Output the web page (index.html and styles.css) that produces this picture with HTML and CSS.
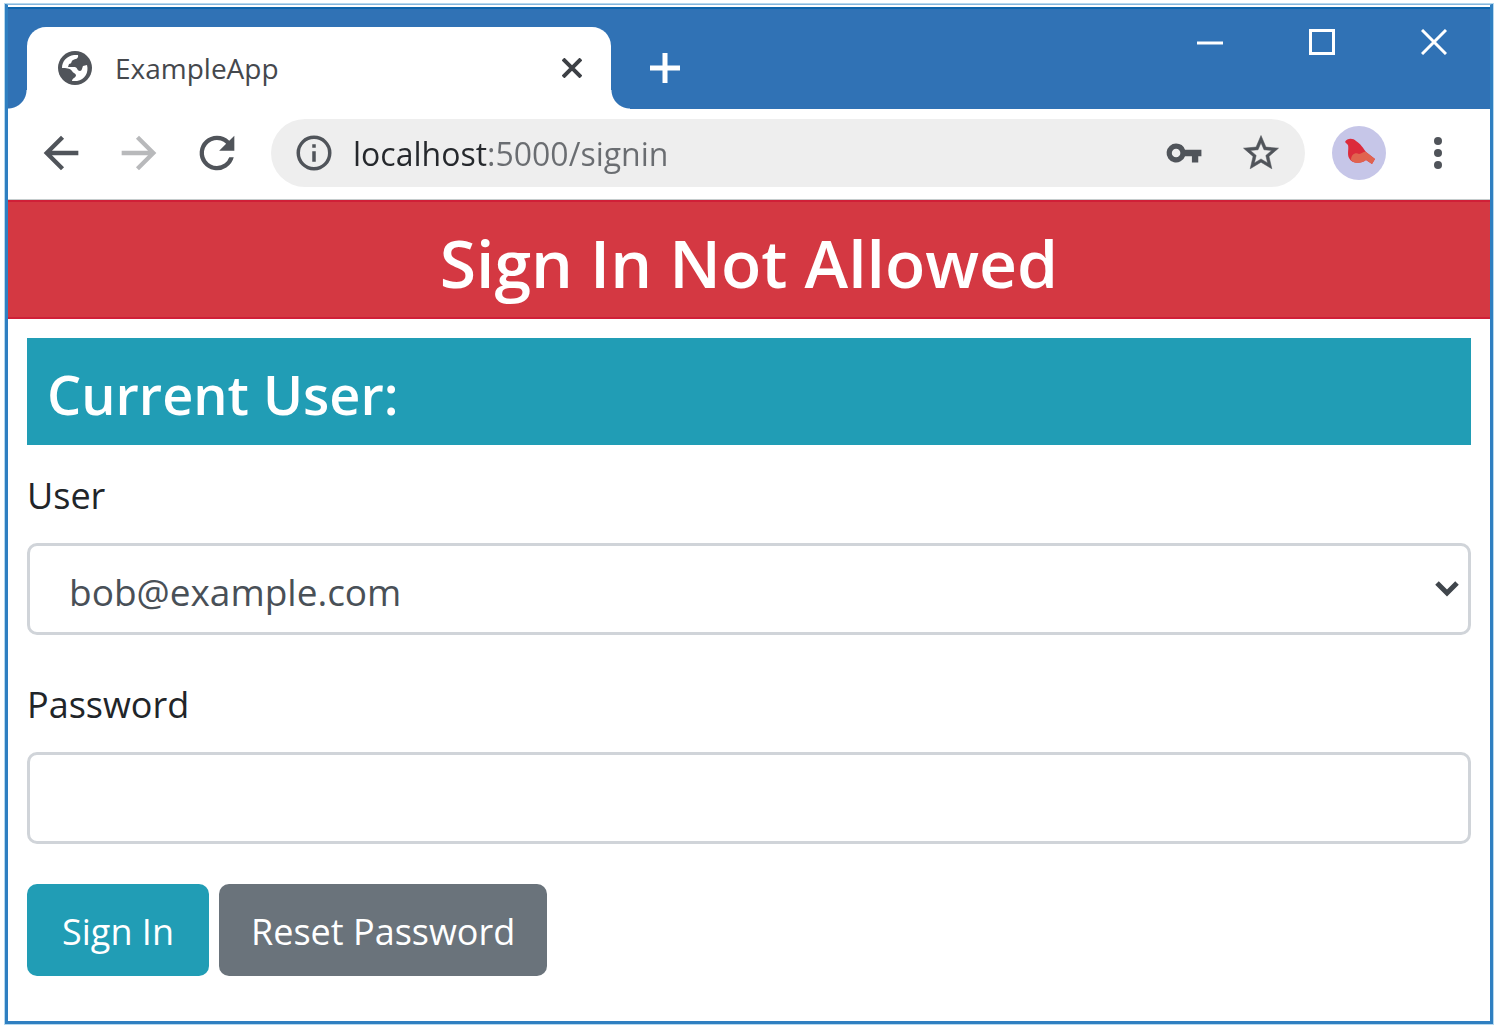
FILE: index.html
```html
<!DOCTYPE html>
<html lang="en">
<head>
<meta charset="utf-8">
<title>ExampleApp</title>
<link rel="stylesheet" href="styles.css">
</head>
<body>
<div class="window">
  <header class="tabstrip">
    <span class="foot foot-left"></span>
    <div class="tab">
      <svg class="globe" viewBox="0 0 34 34" aria-hidden="true">
        <circle cx="17" cy="17" r="17" fill="#50545a"/>
        <path d="M4 17 C4 10 9 5 16 4 L20 4 C21 8 17 8 15 9 C13 10 14 13 11 13 L10 16 L17 16 C20 17 19 20 22 20 C24 20 24 17 25 15 L29 14 C31 21 27 29 19 30 L14 30 C14 27 18 27 18 24 C17 22 15 22 14 20 C12 17 8 17 4 17Z" fill="#fff"/>
      </svg>
      <span class="tab-title">ExampleApp</span>
      <button class="icon-button" type="button" aria-label="Close tab">
        <svg width="20" height="20" viewBox="0 0 20 20"><path d="M1 1 19 19M19 1 1 19" stroke="#3d4045" stroke-width="4"/></svg>
      </button>
    </div>
    <span class="foot foot-right"></span>
    <button class="icon-button new-tab" type="button" aria-label="New tab">
      <svg width="30" height="30" viewBox="0 0 30 30"><path d="M15 0V30M0 15H30" stroke="#fff" stroke-width="5"/></svg>
    </button>
    <div class="window-controls">
      <button class="icon-button control" type="button" aria-label="Minimize">
        <svg width="26" height="26" viewBox="0 0 26 26"><path d="M0 14H26" stroke="#fff" stroke-width="3"/></svg>
      </button>
      <button class="icon-button control" type="button" aria-label="Maximize">
        <svg width="26" height="26" viewBox="0 0 26 26"><path d="M1.500 1.500H24.500V24.500H1.500Z" fill="none" stroke="#fff" stroke-width="3"/></svg>
      </button>
      <button class="icon-button control" type="button" aria-label="Close">
        <svg width="26" height="26" viewBox="0 0 26 26"><path d="M1 1 25 25M25 1 1 25" stroke="#fff" stroke-width="3"/></svg>
      </button>
    </div>
  </header>

  <nav class="toolbar" aria-label="Browser toolbar">
    <div class="nav-buttons">
      <button class="icon-button" type="button" aria-label="Back">
        <svg width="52" height="52" viewBox="0 0 24 24"><path d="M20 11H7.830l5.590-5.590L12 4l-8 8 8 8 1.410-1.410L7.830 13H20z" fill="#50545a"/></svg>
      </button>
      <button class="icon-button" type="button" aria-label="Forward">
        <svg width="52" height="52" viewBox="0 0 24 24"><path d="M12 4l-1.410 1.410L16.170 11H4v2h12.170l-5.580 5.590L12 20l8-8z" fill="#b8b9bb"/></svg>
      </button>
      <button class="icon-button" type="button" aria-label="Reload">
        <svg width="52" height="52" viewBox="0 0 24 24"><path d="M17.650 6.350A7.958 7.958 0 0 0 12 4a8 8 0 1 0 7.730 10h-2.080A5.990 5.990 0 0 1 12 18a6 6 0 1 1 4.220-10.220L13 11h7V4z" fill="#50545a"/></svg>
      </button>
    </div>
    <div class="omnibox">
      <svg width="42" height="42" viewBox="0 0 24 24" aria-hidden="true"><path d="M11 7h2v2h-2zm0 4h2v6h-2zm1-9a10 10 0 1 0 0 20 10 10 0 0 0 0-20zm0 18a8 8 0 1 1 0-16 8 8 0 0 1 0 16z" fill="#50545a"/></svg>
      <input class="address" type="text" value="localhost:5000/signin" aria-label="Address">
      <button class="icon-button" type="button" aria-label="Saved passwords">
        <svg width="38" height="38" viewBox="0 0 24 24"><path d="M12.650 10A5.990 5.990 0 0 0 7 6a6 6 0 1 0 5.650 8H17v4h4v-4h2v-4H12.650zM7 14.700a2.700 2.700 0 1 1 0-5.400 2.700 2.700 0 0 1 0 5.400z" fill="#50545a"/></svg>
      </button>
      <button class="icon-button" type="button" aria-label="Bookmark this page">
        <svg width="42" height="42" viewBox="0 0 24 24"><path d="M22 9.240l-7.190-.62L12 2 9.190 8.630 2 9.240l5.460 4.730L5.820 21 12 17.270 18.180 21l-1.630-7.030L22 9.240zM12 15.400l-3.760 2.270 1-4.280-3.320-2.880 4.380-.38L12 6.100l1.710 4.040 4.380.38-3.320 2.880 1 4.280L12 15.400z" fill="#50545a" stroke="#50545a" stroke-width=".3"/></svg>
      </button>
    </div>
    <button class="icon-button avatar" type="button" aria-label="Profile">
      <svg width="54" height="54" viewBox="0 0 54 54"><circle cx="27" cy="27" r="27" fill="#c6c6e8"/><path d="M13 16 C15 12 21 12 24 15 C29 18 31 22 34 26 L43 33 40 38 34 34 C29 38 20 38 17 32 C15 28 17 23 16 19Z" fill="#dc2b3b"/><path d="M19 34 C19 29 23 26 27 28 C30 28 32 25 34 26 L43 33 40 38 34 34 C29 38 22 38 19 34Z" fill="#e0634f"/></svg>
    </button>
    <button class="icon-button menu" type="button" aria-label="Menu">
      <svg width="10" height="34" viewBox="0 0 10 34"><g fill="#50545a"><circle cx="5" cy="5" r="4"/><circle cx="5" cy="17" r="4"/><circle cx="5" cy="29" r="4"/></g></svg>
    </button>
  </nav>

  <main>
    <h1 class="banner">Sign In Not Allowed</h1>
    <div class="content">
      <h2 class="current-user">Current User:</h2>
      <form>
        <div class="field">
          <label for="user">User</label>
          <div class="select-wrap">
            <select class="control-box" id="user"><option>bob@example.com</option></select>
            <svg class="chevron" width="24" height="16" viewBox="0 0 24 16" aria-hidden="true"><path d="M2 2 12 12 22 2" fill="none" stroke="#40464c" stroke-width="5"/></svg>
          </div>
        </div>
        <div class="field">
          <label for="password">Password</label>
          <input class="control-box" id="password" type="password">
        </div>
        <div class="actions">
          <button class="btn btn-info" type="submit">Sign In</button>
          <button class="btn btn-secondary" type="button">Reset Password</button>
        </div>
      </form>
    </div>
  </main>
</div>
</body>
</html>
```
FILE: styles.css
```css
* { box-sizing: border-box; }

body {
  margin: 0;
  padding: 3px 6px 5px 4px;
  min-height: 100vh;
  display: flex;
  background: #fff;
  color: #212529;
  font-family: "Open Sans", "Noto Sans", sans-serif;
  font-size: 36px;
  line-height: 56px;
}

.window {
  flex: 1;
  display: flex;
  flex-direction: column;
  border: 4px solid #2f7fc1;
  border-top: 2px solid #86b6dc;
  outline: 1px solid #b5d8ee;
  outline-offset: -1px;
  padding-top: 2px;
}

button, input, select { font: inherit; }

.icon-button {
  display: flex;
  align-items: center;
  justify-content: center;
  padding: 0;
  border: 0;
  background: none;
}

svg { display: block; flex: none; }

.tabstrip {
  display: flex;
  align-items: flex-end;
  height: 102px;
  background: #3072b5;
  border-top: 2px solid #0d65ad;
}

.foot { width: 19px; height: 19px; }
.foot-left { background: radial-gradient(circle at 0 0, transparent 18px, #fff 19px); }
.foot-right { background: radial-gradient(circle at 100% 0, transparent 18px, #fff 19px); }

.tab {
  display: flex;
  align-items: center;
  width: 584px;
  height: 82px;
  padding: 0 29px 0 31px;
  border-radius: 19px 19px 0 0;
  background: #fff;
}

.globe { width: 34px; height: 34px; }
.tab-title { flex: 1; margin-left: 23px; font-size: 28px; color: #45484d; }

.new-tab { width: 70px; height: 82px; }

.window-controls { display: flex; align-self: flex-start; margin-left: auto; }
.control { width: 112px; height: 66px; }

.toolbar {
  display: flex;
  align-items: center;
  height: 91px;
  padding: 0 37px 2px 27px;
  border-bottom: 1px solid #c5cccd;
}

.nav-buttons { display: flex; gap: 26px; margin-right: 28px; }

.omnibox {
  flex: 1;
  display: flex;
  align-items: center;
  height: 68px;
  padding: 0 23px 0 22px;
  border-radius: 34px;
  background: #eee;
}

.omnibox .icon-button { margin-left: 37px; }

.address {
  flex: 1;
  min-width: 0;
  margin-left: 18px;
  padding: 2px 0 0;
  border: 0;
  font-size: 32px;
  line-height: 44px;
  color: transparent;
  background: linear-gradient(90deg, #25282c 133px, #6a6d71 133px);
  background-clip: text;
}

.avatar { margin-left: 27px; }
.menu { width: 30px; margin-left: 37px; }

.banner, .current-user { margin: 0; color: #fff; font-weight: 600; }

.banner {
  padding: 22px 20px 17px;
  background: #d43842;
  border: 2px solid #d01f37;
  border-width: 2px 0;
  font-size: 66px;
  line-height: 76px;
  text-align: center;
}

.content { padding: 19px; }

.current-user {
  padding: 23px 20px 17px;
  background: #219db5;
  font-size: 54px;
  line-height: 67px;
}

form { padding-top: 23px; }
.field { margin-bottom: 40px; }
.field label { display: block; margin-bottom: 19px; }

.field + .field { padding-top: 2px; }

.control-box {
  display: block;
  width: 100%;
  height: 92px;
  padding: 6px 39px 0;
  border: 3px solid #d0d4d9;
  border-radius: 10px;
  background: #fff;
  color: #495057;
  font-size: 37px;
  appearance: none;
}

.select-wrap { display: grid; align-items: center; }
.select-wrap > * { grid-area: 1 / 1; }
.chevron { justify-self: end; margin-right: 12px; pointer-events: none; }

.actions { display: flex; gap: 10px; }

.btn {
  min-width: 182px;
  height: 92px;
  padding: 4px 32px 0;
  border: 0;
  border-radius: 10px;
  color: #fff;
}

.btn-info { background: #219db5; }
.btn-secondary { background: #6a737b; }
```
